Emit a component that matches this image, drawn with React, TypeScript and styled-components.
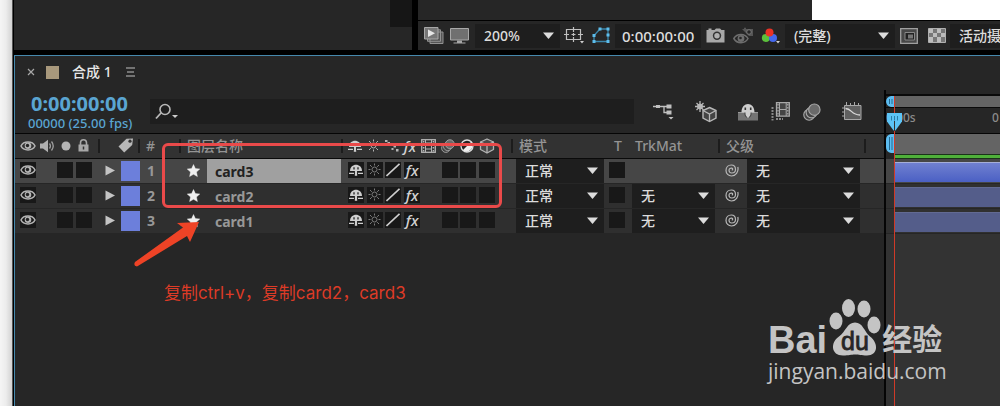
import React from "react";
import styled, { createGlobalStyle } from "styled-components";

const latin = `"Noto Sans", "Noto Sans CJK SC", sans-serif`;

const GlobalStyle = createGlobalStyle`
  *, *::before, *::after { box-sizing: border-box; }
  body { margin: 0; background: #000; font-family: ${latin}; font-size: 14px; font-weight: 500; color: #dcdcdc; }
  button, input, select { font: inherit; color: inherit; border: 0; padding: 0; margin: 0; background: none; border-radius: 0; }
  button { display: flex; align-items: center; justify-content: center; }
  svg { display: block; flex: none; }
`;

const Page = styled.div`
  display: flex;
  min-height: 100vh;
  overflow: hidden;
`;

const DesktopEdge = styled.div`
  flex: 0 0 13px;
  background: linear-gradient(90deg, #f5f5f5 0, #ececec 6px, #d2d2d2 12px, #555 12px);
`;

const Workspace = styled.main`
  flex: 1;
  min-width: 0;
  display: flex;
  flex-direction: column;
  position: relative;
  background: #000;
`;

const TopPanels = styled.div`
  display: flex;
  gap: 6px;
  height: 50px;
  padding-left: 1px;
`;

const ProjectPanel = styled.section`
  flex: 0 0 398px;
  display: flex;
  justify-content: flex-end;
  background: #262626;
`;

const PanelScroll = styled.div`
  width: 22px;
  height: 27px;
  background: #161616;
`;

const Viewer = styled.section`
  flex: 1;
  min-width: 0;
  display: flex;
  flex-direction: column;
  background: #262626;
`;

const Stage = styled.div`
  height: 21px;
  padding-left: 394px;
  border-bottom: 1px solid #000;
`;

const Canvas = styled.div`
  height: 20px;
  background: #fff;
`;

const ViewerBar = styled.div`
  flex: 1;
  display: flex;
  align-items: center;
  padding-left: 5px;
  overflow: hidden;
`;

const IconButton = styled.button<{ $w: number }>`
  flex: none;
  width: ${(p) => p.$w}px;
  height: 24px;
`;

const Drop = styled.label<{ $w: number }>`
  position: relative;
  flex: none;
  display: block;
  width: ${(p) => p.$w}px;
  height: 24px;
  background: #1e1e1e;

  select {
    appearance: none;
    display: block;
    width: 100%;
    height: 100%;
    padding: 0 0 0 9px;
    outline: 0;
  }

  svg {
    position: absolute;
    right: 6px;
    top: 8px;
    pointer-events: none;
  }
`;

const FrameTime = styled.input`
  flex: none;
  width: 86px;
  height: 24px;
  padding-left: 7px;
  font-size: 15px;
  background: #1e1e1e;
`;

const Timeline = styled.section`
  flex: 1;
  display: flex;
  flex-direction: column;
  margin: 5px 0 0 1px;
  border: solid #4689ae;
  border-width: 1px 0 0 1px;
  background: #262626;
`;

const TabBar = styled.div`
  display: flex;
  align-items: center;
  height: 34px;
  padding: 0 0 2px 12px;
`;

const TabSwatch = styled.i`
  width: 13px;
  height: 13px;
  margin: 0 13px 0 11px;
  background: #a8987c;
`;

const TabTitle = styled.h1`
  margin: 0 14px 0 0;
  font-size: 14px;
  font-weight: 500;
  line-height: 20px;
  color: #e6e6e6;
`;

const TimelineBody = styled.div`
  flex: 1;
  display: flex;
`;

const LayerSide = styled.div`
  flex: none;
`;

const Controls = styled.div`
  display: flex;
  align-items: center;
  height: 44px;
  border-bottom: 1px solid #050505;
`;

const TimeBlock = styled.div`
  width: 135px;
  padding-left: 13px;
  color: #5aa5d2;
`;

const CurrentTime = styled.div`
  padding-left: 3px;
  font-size: 20px;
  font-weight: 700;
  line-height: 22px;
`;

const FrameInfo = styled.div`
  font-size: 13px;
  line-height: 16px;
  white-space: nowrap;
`;

const Search = styled.label`
  flex: 1;
  display: flex;
  align-items: center;
  height: 25px;
  margin-bottom: 1px;
  padding-left: 5px;
  background: #1e1e1e;

  input { flex: 1; min-width: 0; height: 100%; outline: 0; }
`;

const ModeButtons = styled.div`
  display: flex;
  align-items: center;
  gap: 21px;
  margin: 0 22px 0 19px;
`;

const SwitchButtons = styled.div`
  display: flex;
  align-items: center;
  gap: 13px;
`;

const LayerTable = styled.table`
  width: 869px;
  table-layout: fixed;
  border-collapse: collapse;
`;

const HeadRow = styled.tr`
  height: 24px;
  background: #323232;
  color: #949494;

  th {
    padding: 0;
    border-bottom: 1px solid #0a0a0a;
    font-weight: 500;
    text-align: left;
    line-height: 20px;
  }
`;

const HeadCell = styled.div<{ $rule?: boolean; $pad?: number; $end?: number }>`
  display: flex;
  align-items: center;
  height: 14px;
  margin-right: ${(p) => p.$end ?? 0}px;
  padding-left: ${(p) => p.$pad ?? 5}px;
  border-right: ${(p) => (p.$rule ? "2px solid #1c1c1c" : "0")};
  white-space: nowrap;
`;

const LayerRow = styled.tr<{ $selected: boolean }>`
  height: 25px;
  background: ${(p) => (p.$selected ? "#464646" : "#2f2f2f")};

  td { padding: 0; border-bottom: 1px solid #262626; }
`;

const Cell = styled.div<{ $pad?: number }>`
  display: flex;
  align-items: center;
  height: 24px;
  padding-left: ${(p) => p.$pad ?? 5}px;
`;

const Toggle = styled.button`
  flex: none;
  width: 16px;
  height: 16px;
  margin-bottom: 2px;
  background: #181818;
`;

const TogglePair = styled.div`
  display: flex;
  gap: 3px;
  margin-left: 21px;
`;

const LabelSwatch = styled.button`
  width: 19px;
  height: 20px;
  margin-left: 6px;
  background: #6c7fdb;
`;

const LayerIndex = styled.span`
  font-size: 14px;
  font-weight: 700;
  color: #989898;
`;

const LayerName = styled.button<{ $selected: boolean }>`
  justify-content: flex-start;
  flex: none;
  width: 134px;
  height: 24px;
  margin-left: 7px;
  padding: 1px 0 0 8px;
  font-size: 14px;
  font-weight: 700;
  color: ${(p) => (p.$selected ? "#222" : "#989898")};
  background: ${(p) => (p.$selected ? "#a0a0a0" : "transparent")};
`;

const Switches = styled.div`
  display: flex;
  justify-content: space-between;
  align-items: center;
  width: 147px;
`;

const Spacer = styled.i`
  width: 16px;
`;

const Fx = styled.span`
  font-size: 15px;
  font-style: italic;
  line-height: 16px;
  color: #d2d2d2;
`;

const TrackSide = styled.div`
  flex: 1;
  min-width: 0;
  position: relative;
  padding-top: 4px;
  border-left: 2px solid #050505;
  background: #262626;
  display: flex;
  flex-direction: column;
  overflow: hidden;
`;

const Navigator = styled.div`
  display: flex;
  height: 14px;
  border: solid #0a0a0a;
  border-width: 2px 0 1px;
`;

const Band = styled.div`
  flex: 1;
  background: #646464;
`;

const Ruler = styled.div`
  display: flex;
  justify-content: space-between;
  height: 26px;
  border-bottom: 1px solid #050505;
  font-size: 12px;
  line-height: 19px;
  color: #8c8c8c;
`;

const RulerEnd = styled.span`
  width: 8px;
`;

const WorkArea = styled.div`
  display: flex;
  height: 20px;
`;

const Cached = styled.div`
  height: 5px;
  margin-left: 8px;
  border: solid #1a331a;
  border-width: 1px 0 1px;
  background: #4fb03a;
`;

const Track = styled.div<{ $selected: boolean }>`
  height: 25px;
  padding: 3px 0 2px 8px;
  background: ${(p) => (p.$selected ? "#464646" : "#303030")};
  border-bottom: 1px solid #262626;
`;

const Bar = styled.div<{ $selected: boolean }>`
  height: 20px;
  border-top: 1px solid ${(p) => (p.$selected ? "#a5aed8" : "#626a92")};
  background: ${(p) => (p.$selected ? "linear-gradient(#7080d0, #4b60c4)" : "#545d8a")};
`;

const EmptyTracks = styled.div`
  flex: 1;
  background: #333;
`;

const Playhead = styled.div`
  position: absolute;
  left: 8px;
  top: 6px;
  bottom: 0;
  width: 1px;
  background: #d03a28;

  svg { position: absolute; left: -7px; top: 17px; }
`;

const Highlight = styled.div`
  position: absolute;
  left: 149px;
  top: 143px;
  width: 340px;
  height: 65px;
  border: 3px solid #ea4a4a;
  border-radius: 6px;
  pointer-events: none;
`;

const Arrow = styled.svg`
  position: absolute;
  left: 120px;
  top: 220px;
`;

const Note = styled.p`
  position: absolute;
  left: 151px;
  top: 281px;
  margin: 0;
  font-family: Inter, "Noto Sans CJK SC", sans-serif;
  font-size: 17px;
  font-weight: 400;
  line-height: 24px;
  white-space: nowrap;
  color: #dd3b26;
`;

const Watermark = styled.div`
  position: absolute;
  right: 52px;
  top: 298px;
  width: 180px;
  color: #c4c4c4;
`;

const Brand = styled.div`
  display: flex;
  align-items: flex-end;
  height: 58px;
  font-family: "Liberation Sans", "Noto Sans CJK SC", sans-serif;
  font-weight: 700;
`;

const BrandLatin = styled.span`
  font-size: 38px;
  line-height: 32px;
`;

const BrandHan = styled.span`
  font-size: 30px;
  line-height: 32px;
`;

const BrandUrl = styled.div`
  margin-top: 2px;
  font-family: "Open Sans", sans-serif;
  font-size: 21px;
  line-height: 26px;
`;

const Caret = () => (
  <svg width="11" height="7" viewBox="0 0 11 7"><path d="M0 .5h11L5.5 7z" fill="#dcdcdc" /></svg>
);

const Eye = () => (
  <svg width="16" height="12" viewBox="0 0 16 12">
    <path d="M1 6C3.5 .8 12.500 .800 15 6 12.500 11.200 3.500 11.200 1 6z" fill="none" stroke="#b4b4b4" strokeWidth="1.500" />
    <circle cx="8" cy="5.800" r="3.300" fill="#b4b4b4" /><circle cx="7.500" cy="5.500" r="1.700" fill="#222" />
  </svg>
);

const Shy = () => (
  <svg width="14" height="12" viewBox="0 0 14 12">
    <path d="M1 7C1-1.500 13-1.500 13 7z" fill="#cecece" />
    <path d="M5 3.300v2.200M9 3.300v2.200" stroke="#222" strokeWidth="1.300" />
    <path d="M7 6v5.800" stroke="#cecece" strokeWidth="2.400" />
    <path d="M5.300 7v3.500M8.700 7v3.500" stroke="#222" strokeWidth=".8" />
    <path d="M0 9.300h5M9 9.300h5" stroke="#cecece" strokeWidth="1.300" />
  </svg>
);

const Sun = ({ color = "#7c7c7c" }: { color?: string }) => (
  <svg width="13" height="13" viewBox="0 0 13 13" stroke={color} fill="none">
    <circle cx="6.500" cy="6.500" r="2.500" />
    <path d="M6.500 .5v2M6.500 10.500v2M.5 6.500h2M10.500 6.500h2M2 2l1.800 1.800M9.200 9.200L11 11M11 2L9.200 3.800M3.800 9.200L2 11" />
  </svg>
);

const Slash = () => (
  <svg width="14" height="14" viewBox="0 0 14 14"><path d="M.5 13L13.500.8" stroke="#cecece" strokeWidth="1.600" /></svg>
);

const Dotted = () => (
  <svg width="14" height="12" viewBox="0 0 14 12" fill="#b4b4b4"><path d="M0 0h2.500v2H0zM2.500 2H5v2H2.500zM5 4h2.500v2H5zM8.500 5.500H11v2H8.500zM6.500 8h2v2h-2zM11 9h2.500v2.500H11z" /></svg>
);

const Film = () => (
  <svg width="15" height="14" viewBox="0 0 15 14" fill="none" stroke="#b4b4b4">
    <rect x=".7" y=".7" width="13.600" height="12.600" strokeWidth="1.300" />
    <path d="M4.500 1v12M10.500 1v12M4.500 4h6M4.500 10h6" />
    <path d="M2.600 2v11M12.400 2v11" strokeDasharray="1.500 1.500" strokeWidth="1.500" />
  </svg>
);

const Rings = ({ size = 18 }: { size?: number }) => (
  <svg width={size} height={size} viewBox="0 0 19 19" stroke="#a8a8a8" strokeWidth="1.200" fill="#444">
    <circle cx="6.500" cy="12.500" r="5.700" /><circle cx="9" cy="10" r="5.700" /><circle cx="12" cy="7" r="6" fill="#6a6a6a" />
  </svg>
);

const Cube = () => (
  <svg width="16" height="16" viewBox="0 0 16 16" stroke="#b4b4b4" strokeWidth="1.300" fill="#4a4a4a" strokeLinejoin="round">
    <path d="M8 1l6.500 3v7.500L8 15l-6.500-3.500V4z" /><path d="M1.500 4L8 7l6.500-3M8 7v8" fill="none" />
  </svg>
);

const HalfDisc = () => (
  <svg width="14" height="14" viewBox="0 0 14 14">
    <circle cx="7" cy="7" r="6" fill="#222" stroke="#ddd" strokeWidth="1.300" /><path d="M11.200 2.800A6 6 0 0 1 2.800 11.200z" fill="#eee" />
  </svg>
);

const Speaker = () => (
  <svg width="15" height="14" viewBox="0 0 15 14">
    <path d="M0 4.500h3L8 .8v12.400L3 9.500H0z" fill="#b0b0b0" />
    <path d="M9.500 4.500q1.800 2.500 0 5M11.500 2.500q3.500 4.500 0 9" fill="none" stroke="#a0a0a0" strokeWidth="1.300" />
  </svg>
);

const Lock = () => (
  <svg width="11" height="13" viewBox="0 0 11 13">
    <path d="M2.500 6V3.800a3 3 0 0 1 6 0V6" fill="none" stroke="#a8a8a8" strokeWidth="1.600" />
    <path d="M.5 5.500h10V12.500H.5z" fill="#a8a8a8" /><path d="M5.500 7.500v3" stroke="#333" strokeWidth="1.500" />
  </svg>
);

const Tag = () => (
  <svg width="16" height="15" viewBox="0 0 16 15">
    <path d="M.5 8.500L8.500.8l6.500-.3-.8 6.500-8 7.500z" fill="#b8b8b8" /><circle cx="12" cy="3.200" r="1.600" fill="#333" />
  </svg>
);

const Star = () => (
  <svg width="13" height="14" viewBox="0 0 13 14">
    <path d="M6.500.5l1.900 4.100 4.400.4-3.300 3 .9 4.600-3.900-2.300-3.900 2.300.9-4.600-3.300-3 4.400-.4z" fill="#efefef" stroke="#efefef" strokeWidth=".4" />
  </svg>
);

const Twirl = () => (
  <svg width="10" height="11" viewBox="0 0 10 11"><path d="M.5.5L10 5.500.5 10.500z" fill="#c4c4c4" /></svg>
);

const Whip = () => (
  <svg width="14" height="13" viewBox="0 0 14 13">
    <path d="M12.800 3C14 8 10.500 12 6.500 12A5.500 5.500 0 0 1 1 6.500C1 3 3.500 1 6.200 1 9 1 10.500 3 10.500 5.500S8.800 9 6.800 9 4 7.800 4 6.200 5.500 4 6.800 4.200 7.800 6 6.800 6.300" fill="none" stroke="#b8b8b8" strokeWidth="1.200" />
  </svg>
);

const layers = [
  { id: 1, name: "card3", selected: true },
  { id: 2, name: "card2", selected: false },
  { id: 3, name: "card1", selected: false },
];

function Dropdown({ name, value, width }: { name: string; value: string; width: number }) {
  return (
    <Drop $w={width}>
      <select aria-label={name} defaultValue={value}><option>{value}</option></select>
      <Caret />
    </Drop>
  );
}

function ViewerControls() {
  return (
    <ViewerBar>
      <IconButton $w={21} aria-label="始终预览">
        <svg width="20" height="17" viewBox="0 0 20 17">
          <path d="M6 5h13v11.500H6zM3.500 2.800h13v11.500h-13z" fill="#555" stroke="#929292" />
          <path d="M.5.5h13.500v11.500H.5z" fill="#777" stroke="#a8a8a8" /><path d="M4 2.500l7 3.800L4 10z" fill="#e6e6e6" />
        </svg>
      </IconButton>
      <IconButton $w={31} aria-label="主查看器">
        <svg width="19" height="16" viewBox="0 0 19 16">
          <path d="M.5.5h18v11.500H.5z" fill="#707070" stroke="#a8a8a8" /><path d="M7 12.500h5v2H7zM3.500 14.500h12v1h-12z" fill="#a8a8a8" />
        </svg>
      </IconButton>
      <Dropdown name="放大率" value="200%" width={85} />
      <IconButton $w={28} aria-label="网格和参考线">
        <svg width="20" height="17" viewBox="0 0 20 17">
          <path d="M2.500 2.500h14v10h-14zM9.500 0v5M9.500 10v5M0 7.500h5M14 7.500h5M7.500 7.500h4M9.500 6v3" fill="none" stroke="#c0c0c0" strokeWidth="1.200" /><path d="M16 14h4l-2 2.500z" fill="#d0d0d0" />
        </svg>
      </IconButton>
      <IconButton $w={27} aria-label="切换蒙版可见性">
        <svg width="19" height="17" viewBox="0 0 19 17">
          <path d="M2 14.500V8.500L8 2h8v12.500z" fill="none" stroke="#3d87ab" strokeWidth="1.300" />
          <path d="M.5 13h3v3h-3zM.5 7h3v3h-3zM6.500.5h3v3h-3zM14.500.5h3v3h-3zM14.500 6.500h3v3h-3zM14.500 13h3v3h-3z" fill="#5dbdec" />
        </svg>
      </IconButton>
      <FrameTime aria-label="预览时间" defaultValue="0:00:00:00" />
      <IconButton $w={28} aria-label="拍摄快照">
        <svg width="19" height="15" viewBox="0 0 19 15">
          <path d="M.5 2h2V.5h3V2h3L10 .5h4L15.500 2h3v12.500H.5z" fill="#a8a8a8" /><circle cx="11" cy="7.800" r="4.200" fill="#333" /><circle cx="11" cy="7.800" r="2.700" fill="#b0b0b0" />
        </svg>
      </IconButton>
      <IconButton $w={28} aria-label="显示快照">
        <svg width="20" height="18" viewBox="0 0 20 18">
          <path d="M.8 11.500C4 6 12 6 15 11.500 12 17 4 17 .8 11.500z" fill="none" stroke="#6e6e6e" strokeWidth="1.500" /><circle cx="8" cy="11.500" r="3.400" fill="#6e6e6e" /><circle cx="7.500" cy="11" r="1.300" fill="#262626" />
          <path d="M9 2h2V.8h2V2h7v7h-4" fill="#555" /><circle cx="16" cy="5" r="2.300" fill="#262626" stroke="#777" />
        </svg>
      </IconButton>
      <IconButton $w={28} aria-label="显示通道">
        <svg width="20" height="16" viewBox="0 0 20 16">
          <circle cx="4.800" cy="10" r="4" fill="#5cc03c" /><circle cx="12" cy="10" r="4" fill="#4468ee" /><circle cx="8.500" cy="4.500" r="4" fill="#e93226" /><path d="M15 13h4l-2 2.500z" fill="#d0d0d0" />
        </svg>
      </IconButton>
      <Dropdown name="分辨率" value="(完整)" width={110} />
      <IconButton $w={28} aria-label="目标区域">
        <svg width="18" height="16" viewBox="0 0 18 16">
          <path d="M.7.7h16.600v14.600H.7z" fill="#484848" stroke="#a0a0a0" strokeWidth="1.300" /><path d="M5 4.500h9.500v7.500H5z" fill="#222" stroke="#888" /><path d="M8 6.500h5v4H8z" fill="#777" />
        </svg>
      </IconButton>
      <IconButton $w={27} aria-label="切换透明网格">
        <svg width="18" height="15" viewBox="0 0 18 15">
          <path d="M.5.5h17v14H.5z" fill="#777" stroke="#b0b0b0" /><path d="M1 1h4v4H1zM9 1h4v4H9zM5 5h4v4H5zM13 5h4v4h-4zM1 9h4v5H1zM9 9h4v5H9z" fill="#bdbdbd" />
        </svg>
      </IconButton>
      <Dropdown name="3D 视图" value="活动摄像机" width={120} />
    </ViewerBar>
  );
}

function TimelineControls() {
  return (
    <Controls>
      <TimeBlock><CurrentTime>0:00:00:00</CurrentTime><FrameInfo>00000 (25.00 fps)</FrameInfo></TimeBlock>
      <Search>
        <svg width="24" height="17" viewBox="0 0 24 17">
          <circle cx="10" cy="6.500" r="5" fill="none" stroke="#b8b8b8" strokeWidth="1.600" /><path d="M6 10l-5 5.500" stroke="#b8b8b8" strokeWidth="1.800" /><path d="M17 12h6l-3 3z" fill="#ccc" />
        </svg>
        <input aria-label="搜索图层" />
      </Search>
      <ModeButtons>
        <button aria-label="合成微型流程图">
          <svg width="21" height="16" viewBox="0 0 21 16">
            <path d="M0 2.500h18M11 2.500v6h3" fill="none" stroke="#c0c0c0" strokeWidth="1.300" /><path d="M3 1h4v3H3zM13.500.5h5v4h-5zM13.500 6.500h5v4h-5zM15.500 13h5L18 15.500z" fill="#c0c0c0" />
          </svg>
        </button>
        <button aria-label="草图 3D">
          <svg width="22" height="22" viewBox="1 0 22 22" stroke="#b8b8b8" fill="none">
            <path d="M6 0v11M1 5.500h10M2.500 2l7 7M9.500 2l-7 7" strokeWidth="1.300" /><circle cx="6" cy="5.500" r="2.500" fill="#b8b8b8" />
            <path d="M15.500 6.500l6.500 3v7.500l-6.500 3.500L9 17V9.500z" fill="#444" strokeWidth="1.400" /><path d="M9 9.500l6.500 3.500L22 9.500M15.500 13v7.500" strokeWidth="1.300" />
          </svg>
        </button>
        <SwitchButtons>
          <button aria-label="隐藏消隐图层">
            <svg width="20" height="18" viewBox="0 0 20 18">
              <path d="M0 9.500h20V17.500H0z" fill="#747474" /><path d="M0 9.500h20" stroke="#999" />
              <path d="M3.500 9.500C3.500-1.800 16.500-1.800 16.500 9.500h-3.500v1.500L10.800 14.500H9.200L7 11V9.500z" fill="#cdcdcd" />
              <path d="M7.300 4.500v2.500M12.700 4.500v2.500" stroke="#333" strokeWidth="1.600" /><path d="M7 9.500v2.500l1.500 2.500M13 9.500v2.500l-1.500 2.500" stroke="#444" fill="none" />
            </svg>
          </button>
          <button aria-label="帧混合">
            <svg width="19" height="19" viewBox="0 0 19 19">
              <path d="M1.500 5v13.500M5 17h7" stroke="#888" strokeWidth="2" strokeDasharray="2 1" />
              <path d="M5.500.7h12.800v13.500H5.500z" fill="#444" stroke="#a8a8a8" strokeWidth="1.300" /><path d="M8.500 1v13M15.200 1v13M8.500 7.500h6.500" stroke="#a8a8a8" /><path d="M7 2v12M16.800 2v12" stroke="#bbb" strokeDasharray="1.500 1.500" />
            </svg>
          </button>
          <button aria-label="运动模糊"><Rings /></button>
        </SwitchButtons>
        <button aria-label="图表编辑器">
          <svg width="20" height="19" viewBox="0 0 20 19">
            <path d="M2.500 3.500h16.500v14H2.500z" fill="#606060" stroke="#a8a8a8" /><path d="M3.500 6.500C10 6.500 9 13 18 13" fill="none" stroke="#d8d8d8" strokeWidth="1.300" /><path d="M4.500 0v4M8.500 1v3M12.500 0v4M16.500 1v3M0 6h3M0 10h3M0 14h3" stroke="#a8a8a8" />
          </svg>
        </button>
      </ModeButtons>
    </Controls>
  );
}

function Layers() {
  return (
    <LayerTable>
      <colgroup>
        {[85, 40, 41, 162, 170, 93, 23, 91, 164].map((w, i) => <col key={i} width={w} />)}
      </colgroup>
      <thead>
        <HeadRow>
          <th aria-label="视频与音频">
            <HeadCell $rule>
              <Eye /><svg width="4" height="1" /><Speaker /><svg width="6" height="1" />
              <svg width="10" height="10" viewBox="0 0 10 10"><circle cx="5" cy="5" r="4.500" fill="#b4b4b4" /></svg>
              <svg width="7" height="1" /><Lock />
            </HeadCell>
          </th>
          <th aria-label="标签"><HeadCell $rule $pad={18}><Tag /></HeadCell></th>
          <th><HeadCell $rule $pad={6}>#</HeadCell></th>
          <th><HeadCell $rule $pad={6}>图层名称</HeadCell></th>
          <th aria-label="开关">
            <HeadCell $rule>
              <Switches><Shy /><Sun color="#b4b4b4" /><Dotted /><Fx>fx</Fx><Film /><Rings size={14} /><HalfDisc /><Cube /></Switches>
            </HeadCell>
          </th>
          <th><HeadCell $pad={6}>模式</HeadCell></th>
          <th><HeadCell $pad={8}>T</HeadCell></th>
          <th><HeadCell $rule $pad={6}>TrkMat</HeadCell></th>
          <th><HeadCell $rule $pad={6} $end={18}>父级</HeadCell></th>
        </HeadRow>
      </thead>
      <tbody>
        {layers.map((l) => (
          <LayerRow key={l.id} $selected={l.selected}>
            <td>
              <Cell>
                <Toggle aria-label="视频"><Eye /></Toggle>
                <TogglePair><Toggle aria-label="独奏" /><Toggle aria-label="锁定" /></TogglePair>
              </Cell>
            </td>
            <td><Cell><button aria-label="展开"><Twirl /></button><LabelSwatch aria-label="标签颜色" /></Cell></td>
            <td><Cell $pad={7}><LayerIndex>{l.id}</LayerIndex></Cell></td>
            <td><Cell $pad={6}><Star /><LayerName $selected={l.selected}>{l.name}</LayerName></Cell></td>
            <td>
              <Cell>
                <Switches>
                  <Toggle aria-label="消隐"><Shy /></Toggle>
                  <Toggle aria-label="折叠变换"><Sun /></Toggle>
                  <Toggle aria-label="质量"><Slash /></Toggle>
                  <Toggle><Fx>fx</Fx></Toggle>
                  <Spacer />
                  <Toggle aria-label="运动模糊" />
                  <Toggle aria-label="调整图层" />
                  <Toggle aria-label="3D 图层" />
                </Switches>
              </Cell>
            </td>
            <td><Cell $pad={3}><Dropdown name="模式" value="正常" width={88} /></Cell></td>
            <td><Cell $pad={3}><Toggle aria-label="保留透明度" /></Cell></td>
            <td><Cell $pad={3}>{!l.selected && <Dropdown name="轨道遮罩" value="无" width={83} />}</Cell></td>
            <td>
              <Cell $pad={4}>
                <IconButton $w={16} aria-label="父级关联器"><Whip /></IconButton>
                <svg width="7" height="1" />
                <Dropdown name="父级" value="无" width={113} />
              </Cell>
            </td>
          </LayerRow>
        ))}
      </tbody>
    </LayerTable>
  );
}

const RangeHandle = ({ h }: { h: number }) => (
  <svg width="8" height={h} viewBox={`0 0 8 ${h}`}>
    <path d={`M8 0H5Q0 1 0 6V${h - 6}Q0 ${h - 1} 5 ${h}H8z`} fill="#5cbcf0" />
    <path d={`M3.500 3v${h - 6}M6 3v${h - 6}`} stroke="#256a92" />
  </svg>
);

function Tracks() {
  return (
    <TrackSide>
      <Navigator><RangeHandle h={11} /><Band /></Navigator>
      <Ruler><span>0:00s</span><RulerEnd>0</RulerEnd></Ruler>
      <WorkArea><RangeHandle h={19} /><Band /></WorkArea>
      <Cached />
      {layers.map((l) => <Track key={l.id} $selected={l.selected}><Bar $selected={l.selected} /></Track>)}
      <EmptyTracks />
      <Playhead>
        <svg width="15" height="18" viewBox="0 0 15 18">
          <path d="M0 0h15v8.500L8.500 17.500h-2L0 8.500z" fill="#5cc4f6" /><path d="M4.500 3v4.500M7.500 3v4.500M10.500 3v4.500" stroke="#2b7eaa" /><path d="M7.500 8v10" stroke="#333" />
        </svg>
      </Playhead>
    </TrackSide>
  );
}

export default function App() {
  return (
    <>
      <GlobalStyle />
      <Page>
        <DesktopEdge />
        <Workspace>
          <TopPanels>
            <ProjectPanel><PanelScroll /></ProjectPanel>
            <Viewer><Stage><Canvas /></Stage><ViewerControls /></Viewer>
          </TopPanels>
          <Timeline>
            <TabBar>
              <button aria-label="关闭"><svg width="8" height="8" viewBox="0 0 8 8"><path d="M1 1l6 6M7 1L1 7" stroke="#a8a8a8" strokeWidth="1.200" /></svg></button>
              <TabSwatch />
              <TabTitle>合成 1</TabTitle>
              <button aria-label="面板菜单"><svg width="9" height="10" viewBox="0 0 9 10"><path d="M0 1h9M1 5h7M0 9h9" stroke="#c0c0c0" strokeWidth="1.200" /></svg></button>
            </TabBar>
            <TimelineBody>
              <LayerSide><TimelineControls /><Layers /></LayerSide>
              <Tracks />
            </TimelineBody>
          </Timeline>
          <Highlight />
          <Arrow width="80" height="50" viewBox="0 0 80 50">
            <path d="M2 42L50 7.500 44 3 66 2 57 22 54 16 4 46.500Q0 46 2 42z" fill="#ee4326" />
          </Arrow>
          <Note>复制ctrl+v，复制card2，card3</Note>
          <Watermark>
            <Brand>
              <BrandLatin>Bai</BrandLatin>
              <svg width="55" height="58" viewBox="0 0 55 58">
                <g fill="#c4c4c4">
                  <ellipse cx="9" cy="23" rx="6.500" ry="8.500" /><ellipse cx="21.500" cy="10" rx="6.500" ry="9" /><ellipse cx="37" cy="11" rx="6.500" ry="8.500" /><ellipse cx="47" cy="27" rx="6.500" ry="8.500" />
                  <path d="M28 24.500c8 0 9 9 15 14 9 7 8 19-3 19-6 0-8-1-12-1s-6 1-12 1c-12 0-13-13-4-19 7-5 8-14 16-14z" />
                </g>
                <text x="14" y="52" fontSize="25" fontWeight="400" stroke="#262626" strokeWidth=".8" fill="#262626">du</text>
              </svg>
              <BrandHan>经验</BrandHan>
            </Brand>
            <BrandUrl>jingyan.baidu.com</BrandUrl>
          </Watermark>
        </Workspace>
      </Page>
    </>
  );
}
